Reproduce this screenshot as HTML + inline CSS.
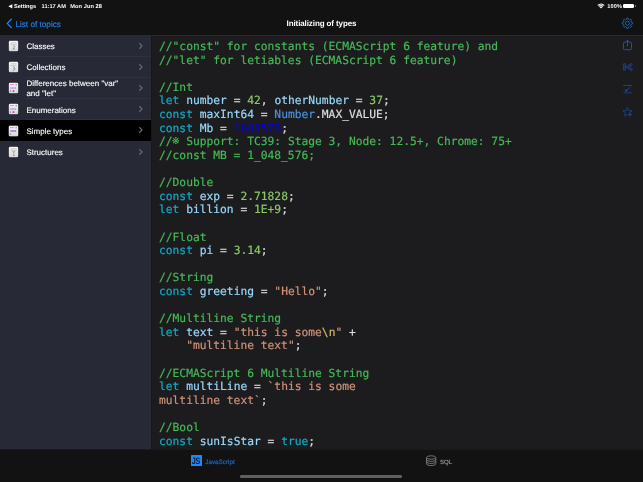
<!DOCTYPE html>
<html lang="en">
<head>
<meta charset="utf-8">
<title>Initializing of types</title>
<style>
*{box-sizing:border-box;margin:0;padding:0}
html,body{width:643px;height:482px;overflow:hidden;background:#121212}
body{position:relative;font-family:"Liberation Sans",sans-serif;color:#fff;text-rendering:geometricPrecision}
.status,.nav,.side,pre.code,.tab{will-change:transform}
.abs{position:absolute}
/* status bar */
.status{position:absolute;left:0;top:0;width:643px;height:12px;font-size:5.65px;font-weight:bold;color:#fff;line-height:12px}
.status span{position:absolute;top:1px;white-space:nowrap}
/* nav */
.nav{position:absolute;left:0;top:12px;width:643px;height:23px}
.back{position:absolute;left:15.4px;top:1.5px;line-height:22px;font-size:8.2px;color:#1a84f5;white-space:nowrap;-webkit-text-stroke:0.15px}
.title{position:absolute;left:0;width:643px;text-align:center;top:0.6px;line-height:22px;font-size:8px;font-weight:bold;color:#fff;letter-spacing:-0.1px}
/* sidebar */
.side{position:absolute;left:0;top:35px;width:151px;height:413.7px;background:#272937}
.row{position:absolute;left:0;width:151px;height:21.2px;font-size:8px;color:#fff;-webkit-text-stroke:0.12px}
.row .lbl{position:absolute;left:26.4px;top:1.5px;height:21.2px;display:flex;align-items:center;line-height:10.2px;width:100px}
.row .sep{position:absolute;left:26px;right:0;bottom:-0.3px;height:0.6px;background:#2f3140}
.row svg.chev{position:absolute;left:138.2px;top:6.6px}
.row svg.ico{position:absolute;left:8.2px;top:4.8px}
.row.sel{background:#000}
/* code */
.codebg{position:absolute;left:151px;top:35px;width:492px;height:413.7px;background:#1c1c1e;border-top:0.7px solid #29292b;border-left:0.6px solid #17171a}
pre.code{position:absolute;left:159.4px;top:39.8px;font-family:"DejaVu Sans Mono","Liberation Mono",monospace;font-size:11.27px;line-height:13.61px;color:#dcdcdc;white-space:pre;-webkit-text-stroke:0.2px}
.c{color:#45b856}.k{color:#10a9c6}.v{color:#96d6f8}.n{color:#8bc766}.s{color:#ce9178}.t{color:#4a90d9}.e{color:#d2b566}
.ref{display:inline-block;width:6.785px;height:10px;line-height:10px;font-size:9.6px;text-align:center;vertical-align:baseline;position:relative;top:-1px;text-indent:-0.9px;font-family:"DejaVu Sans","Noto Sans CJK JP",sans-serif;-webkit-text-stroke:0.25px}
.lnk{color:#0000e6;text-decoration:underline;text-decoration-thickness:1px;text-underline-offset:1.2px}
/* tab bar */
.tab{position:absolute;left:0;top:448.7px;width:643px;height:33.3px;background:#121212;box-shadow:inset 0 0.6px 0 #232325}
.tab .t1{position:absolute;left:205.3px;top:9.8px;font-size:6.3px;color:#1c66c2;line-height:8px;white-space:nowrap;-webkit-text-stroke:0.2px}
.tab .t2{position:absolute;left:440px;top:9.8px;font-size:6.1px;color:#8e8e93;line-height:8px;white-space:nowrap;-webkit-text-stroke:0.2px}
.home{position:absolute;left:240.4px;top:475.3px;width:162.1px;height:2.6px;border-radius:1.3px;background:#606062}
</style>
</head>
<body>
<svg width="0" height="0" style="position:absolute"><defs>
<linearGradient id="pg" x1="0" y1="0" x2="0" y2="1"><stop offset="0" stop-color="#f6f6f6"/><stop offset="1" stop-color="#d9d9da"/></linearGradient>
</defs></svg>
<div class="status">
  <svg class="abs" style="left:7.6px;top:4px" width="5" height="5" viewBox="0 0 5 5"><path d="M0.3 2.3 L4.3 0.2 V4.4 Z" fill="#fff"/></svg>
  <span style="left:13.9px">Settings</span>
  <span style="left:41.6px">11:17 AM</span>
  <span style="left:70.2px;letter-spacing:0.08px">Mon Jun 28</span>
  <span style="left:607.2px;letter-spacing:0.1px">100%</span>
</div>
<svg class="abs" style="left:597.1px;top:3px" width="8" height="6" viewBox="0 0 8 6"><path d="M0.4 2 A5.4 5.4 0 0 1 7.6 2 L4 5.5 Z" fill="#fff"/><path d="M1.1 2.9 A4.2 4.2 0 0 1 6.9 2.9 M2.2 4 A2.7 2.7 0 0 1 5.8 4" stroke="#121212" stroke-width="0.5" fill="none"/></svg>
<div class="abs" style="left:623.4px;top:3.9px;width:10.5px;height:4.4px;border-radius:1.3px;background:#fff"></div>
<div class="abs" style="left:634.6px;top:5.3px;width:0.8px;height:1.6px;border-radius:0.4px;background:#8e8e90"></div>

<div class="nav">
  <svg class="abs" style="left:4.9px;top:6.2px" width="8" height="11" viewBox="0 0 8 11"><path d="M6.3 1.3 L2.2 5.4 L6.3 9.5" fill="none" stroke="#1a84f5" stroke-width="1.3" stroke-linecap="round" stroke-linejoin="round"/></svg>
  <div class="back">List of topics</div>
  <div class="title">Initializing of types</div>
</div>

<div class="side">
  <div class="row" style="top:0.0px"><svg class="ico" width="11" height="12" viewBox="0 0 11 12"><rect x="0.2" y="0.3" width="10.6" height="11.6" rx="1.8" fill="#1b1c27" opacity="0.75"/><rect x="0.8" y="0.8" width="9.4" height="10.4" rx="1.2" fill="url(#pg)"/><path d="M2.6 2.8H8.6 M2.6 4.4H8.6" stroke="#a9a9ac" stroke-width="0.5"/><path d="M4.9 6.2 C5.2 5.4 6.8 5.4 6.7 6.5 C6.6 7.4 5.2 7.9 5 8.9 H7" fill="none" stroke="#77777b" stroke-width="0.65"/><path d="M3.4 10.1H6.4" stroke="#c2c2c5" stroke-width="0.4"/></svg><div class="lbl">Classes</div><div class="sep"></div><svg class="chev" width="6" height="8" viewBox="0 0 6 8"><path d="M1.5 1.5 L4.1 4 L1.5 6.5" fill="none" stroke="#686976" stroke-width="1.05" stroke-linecap="round" stroke-linejoin="round"/></svg></div>
  <div class="row" style="top:21.2px"><svg class="ico" width="11" height="12" viewBox="0 0 11 12"><rect x="0.2" y="0.3" width="10.6" height="11.6" rx="1.8" fill="#1b1c27" opacity="0.75"/><rect x="0.8" y="0.8" width="9.4" height="10.4" rx="1.2" fill="url(#pg)"/><path d="M2.6 2.8H8.6 M2.6 4.4H8.6" stroke="#a9a9ac" stroke-width="0.5"/><path d="M4.9 5.6 C7.6 6 7.6 9.4 4.7 9.9" fill="none" stroke="#8a8a8e" stroke-width="0.9"/><path d="M5.2 7.7H6.4" stroke="#8a8a8e" stroke-width="0.6"/></svg><div class="lbl">Collections</div><div class="sep"></div><svg class="chev" width="6" height="8" viewBox="0 0 6 8"><path d="M1.5 1.5 L4.1 4 L1.5 6.5" fill="none" stroke="#686976" stroke-width="1.05" stroke-linecap="round" stroke-linejoin="round"/></svg></div>
  <div class="row" style="top:42.4px"><svg class="ico" width="11" height="12" viewBox="0 0 11 12"><rect x="0.2" y="0.3" width="10.6" height="11.6" rx="1.8" fill="#1b1c27" opacity="0.75"/><rect x="0.8" y="0.8" width="9.4" height="10.4" rx="1.2" fill="url(#pg)"/><path d="M2.1 2.6H6.3" stroke="#ee6cce" stroke-width="1" stroke-dasharray="1.6 0.25"/><path d="M8.2 1.8V3.5" stroke="#3a3a40" stroke-width="0.6"/><path d="M2.2 6H8.3" stroke="#8052d8" stroke-width="0.8" stroke-dasharray="1.3 0.2"/><path d="M4.3 9H6.7" stroke="#e03cc4" stroke-width="0.6"/><circle cx="5.5" cy="9" r="0.85" fill="#dc22bc"/><path d="M2.4 8.3V9.9" stroke="#4a4a50" stroke-width="0.55"/><path d="M8.7 8.8V9.5" stroke="#9a9a9e" stroke-width="0.4"/></svg><div class="lbl">Differences between "var" and "let"</div><div class="sep"></div><svg class="chev" width="6" height="8" viewBox="0 0 6 8"><path d="M1.5 1.5 L4.1 4 L1.5 6.5" fill="none" stroke="#686976" stroke-width="1.05" stroke-linecap="round" stroke-linejoin="round"/></svg></div>
  <div class="row" style="top:63.6px"><svg class="ico" width="11" height="12" viewBox="0 0 11 12"><rect x="0.2" y="0.3" width="10.6" height="11.6" rx="1.8" fill="#1b1c27" opacity="0.75"/><rect x="0.8" y="0.8" width="9.4" height="10.4" rx="1.2" fill="url(#pg)"/><path d="M2.1 2.6H6.3" stroke="#ee6cce" stroke-width="1" stroke-dasharray="1.6 0.25"/><path d="M8.2 1.8V3.5" stroke="#3a3a40" stroke-width="0.6"/><path d="M2.2 6H8.3" stroke="#8052d8" stroke-width="0.8" stroke-dasharray="1.3 0.2"/><path d="M4.3 9H6.7" stroke="#e03cc4" stroke-width="0.6"/><circle cx="5.5" cy="9" r="0.85" fill="#dc22bc"/><path d="M2.4 8.3V9.9" stroke="#4a4a50" stroke-width="0.55"/><path d="M8.7 8.8V9.5" stroke="#9a9a9e" stroke-width="0.4"/></svg><div class="lbl">Enumerations</div><div class="sep"></div><svg class="chev" width="6" height="8" viewBox="0 0 6 8"><path d="M1.5 1.5 L4.1 4 L1.5 6.5" fill="none" stroke="#686976" stroke-width="1.05" stroke-linecap="round" stroke-linejoin="round"/></svg></div>
  <div class="row sel" style="top:84.8px"><svg class="ico" width="11" height="12" viewBox="0 0 11 12"><rect x="0.2" y="0.3" width="10.6" height="11.6" rx="1.8" fill="#1b1c27" opacity="0.75"/><rect x="0.8" y="0.8" width="9.4" height="10.4" rx="1.2" fill="url(#pg)"/><path d="M2.1 2.6H6.3" stroke="#ee6cce" stroke-width="1" stroke-dasharray="1.6 0.25"/><path d="M8.2 1.8V3.5" stroke="#3a3a40" stroke-width="0.6"/><rect x="2.1" y="5" width="6.4" height="1.9" rx="0.4" fill="#c4b0f0"/><path d="M2.5 6H8.1" stroke="#7d50d6" stroke-width="0.8" stroke-dasharray="1.2 0.25"/><path d="M2.4 8.3V9.9" stroke="#4a4a50" stroke-width="0.55"/><path d="M3.6 9.6H8.2" stroke="#cfcfd3" stroke-width="0.45"/></svg><div class="lbl">Simple types</div><svg class="chev" width="6" height="8" viewBox="0 0 6 8"><path d="M1.5 1.5 L4.1 4 L1.5 6.5" fill="none" stroke="#686976" stroke-width="1.05" stroke-linecap="round" stroke-linejoin="round"/></svg></div>
  <div class="row" style="top:106.0px"><svg class="ico" width="11" height="12" viewBox="0 0 11 12"><rect x="0.2" y="0.3" width="10.6" height="11.6" rx="1.8" fill="#1b1c27" opacity="0.75"/><rect x="0.8" y="0.8" width="9.4" height="10.4" rx="1.2" fill="url(#pg)"/><path d="M2.6 2.8H8.6 M2.6 4.4H8.6" stroke="#a9a9ac" stroke-width="0.5"/><path d="M4.4 5.7H7.2 M5.8 5.7V9.3 M4.9 9.5H6.9" fill="none" stroke="#85858a" stroke-width="0.6"/></svg><div class="lbl">Structures</div><svg class="chev" width="6" height="8" viewBox="0 0 6 8"><path d="M1.5 1.5 L4.1 4 L1.5 6.5" fill="none" stroke="#686976" stroke-width="1.05" stroke-linecap="round" stroke-linejoin="round"/></svg></div>
</div>

<div class="codebg"></div>
<pre class="code"><span class="c">//"const" for constants (ECMAScript 6 feature) and</span>
<span class="c">//"let" for letiables (ECMAScript 6 feature)</span>

<span class="c">//Int</span>
<span class="k">let</span> <span class="v">number</span> = <span class="n">42</span>, <span class="v">otherNumber</span> = <span class="n">37</span>;
<span class="k">const</span> <span class="v">maxInt64</span> = <span class="t">Number</span>.MAX_VALUE;
<span class="k">const</span> <span class="v">Mb</span> = <span class="lnk">1048576</span>;
<span class="c">//<span class="ref">※</span> Support: TC39: Stage 3, Node: 12.5+, Chrome: 75+</span>
<span class="c">//const MB = 1_048_576;</span>

<span class="c">//Double</span>
<span class="k">const</span> <span class="v">exp</span> = <span class="n">2.71828</span>;
<span class="k">let</span> <span class="v">billion</span> = <span class="n">1E+9</span>;

<span class="c">//Float</span>
<span class="k">const</span> <span class="v">pi</span> = <span class="n">3.14</span>;

<span class="c">//String</span>
<span class="k">const</span> <span class="v">greeting</span> = <span class="s">"Hello"</span>;

<span class="c">//Multiline String</span>
<span class="k">let</span> <span class="v">text</span> = <span class="s">"this is some<span class="e">\n</span>"</span> +
    <span class="s">"multiline text"</span>;

<span class="c">//ECMAScript 6 Multiline String</span>
<span class="k">let</span> <span class="v">multiLine</span> = <span class="s">`this is some</span>
<span class="s">multiline text`</span>;

<span class="c">//Bool</span>
<span class="k">const</span> <span class="v">sunIsStar</span> = <span class="k">true</span>;
</pre>

<!-- right toolbar -->
<svg class="abs" style="left:619px;top:15px" width="17" height="17" viewBox="-8.5 -8.5 17 17"><g transform="translate(-0.05,-0.25) scale(0.94)"><path d="M-0.99 -4.13 L-0.70 -5.51 L0.70 -5.51 L0.99 -4.13 L2.22 -3.62 L3.40 -4.39 L4.39 -3.40 L3.62 -2.22 L4.13 -0.99 L5.51 -0.70 L5.51 0.70 L4.13 0.99 L3.62 2.22 L4.39 3.40 L3.40 4.39 L2.22 3.62 L0.99 4.13 L0.70 5.51 L-0.70 5.51 L-0.99 4.13 L-2.22 3.62 L-3.40 4.39 L-4.39 3.40 L-3.62 2.22 L-4.13 0.99 L-5.51 0.70 L-5.51 -0.70 L-4.13 -0.99 L-3.62 -2.22 L-4.39 -3.40 L-3.40 -4.39 L-2.22 -3.62 Z" fill="none" stroke="#1f74d6" stroke-width="0.8" stroke-linejoin="round"/><circle r="2.1" fill="none" stroke="#1f74d6" stroke-width="0.8"/></g></svg>
<svg class="abs" style="left:619px;top:37px" width="17" height="16" viewBox="0 0 17 16"><path d="M6.7 5.3 H5.5 Q4.45 5.3 4.45 6.35 V11.65 Q4.45 12.7 5.5 12.7 H11.5 Q12.55 12.7 12.55 11.65 V6.35 Q12.55 5.3 11.5 5.3 H10.3" fill="none" stroke="#1b5fd4" stroke-width="0.85" stroke-linecap="round"/><path d="M8.5 3.6 V8.9" stroke="#1b5fd4" stroke-width="0.8" stroke-linecap="round"/><path d="M7.6 4.2 L8.5 3.3 L9.4 4.2 Z" fill="#1b5fd4" stroke="#1b5fd4" stroke-width="0.7" stroke-linejoin="round" stroke-linecap="round"/></svg>
<svg class="abs" style="left:619px;top:59px" width="17" height="16" viewBox="0 0 17 16"><rect x="4.35" y="4.5" width="2.1" height="7" rx="0.9" fill="#162e5c" stroke="#1d4da4" stroke-width="0.65"/><path d="M7.15 8 L12.2 4.3 L13.4 5.6 L10.4 8 L13.4 10.4 L12.2 11.7 Z" fill="#162e5c" stroke="#1d4da4" stroke-width="0.65" stroke-linejoin="round"/></svg>
<svg class="abs" style="left:619px;top:81px" width="17" height="16" viewBox="0 0 17 16"><path d="M4.6 4.45H12.6" stroke="#1c4fb0" stroke-width="0.75" stroke-linecap="round"/><path d="M4.6 11.8H12.6" stroke="#1b469c" stroke-width="0.7" stroke-linecap="round"/><path d="M10.9 6.5 L7.6 9.3" stroke="#1c4fb0" stroke-width="0.75" stroke-linecap="round"/><path d="M6.0 10.7 L6.5 7.7 L9.1 10.2 Z" fill="#1c4fb0"/></svg>
<svg class="abs" style="left:619px;top:104px" width="17" height="16" viewBox="0 0 17 16"><path d="M10.2 8.9 L13.0 6.8 L9.7 6.6 L8.45 3.3 L7.2 6.6 L3.9 6.8 L6.5 8.9 L5.6 12.1 L8.45 10.4 L9.3 10.9" fill="none" stroke="#1b4896" stroke-width="0.75" stroke-linejoin="round" stroke-linecap="round"/><path d="M9.7 10.7H12.5 M11.1 9.3V12.1" stroke="#1c52ae" stroke-width="0.8" stroke-linecap="round"/></svg>

<div class="tab">
  <div class="abs" style="left:191px;top:6.3px;width:11px;height:11px;border-radius:0.5px;background:#168cff"></div>
  <div class="abs" style="left:190.1px;top:7px;width:12px;text-align:center;font-size:9.3px;line-height:10px;color:#0d1a2c;font-weight:bold;letter-spacing:-0.1px;transform:scaleX(0.78)">JS</div>
  <div class="t1">JavaScript</div>
  <svg class="abs" style="left:425px;top:5.3px" width="13" height="13" viewBox="0 0 13 13"><g fill="none" stroke="#929295" stroke-width="0.75"><ellipse cx="6.15" cy="3.5" rx="4.6" ry="1.7"/><path d="M1.55 3.5 V9.8 C1.55 12.1 10.75 12.1 10.75 9.8 V3.5"/><path d="M1.55 5.6 C1.55 7.9 10.75 7.9 10.75 5.6 M1.55 7.7 C1.55 10 10.75 10 10.75 7.7"/></g></svg>
  <div class="t2">SQL</div>
</div>
<div class="home"></div>
</body>
</html>
